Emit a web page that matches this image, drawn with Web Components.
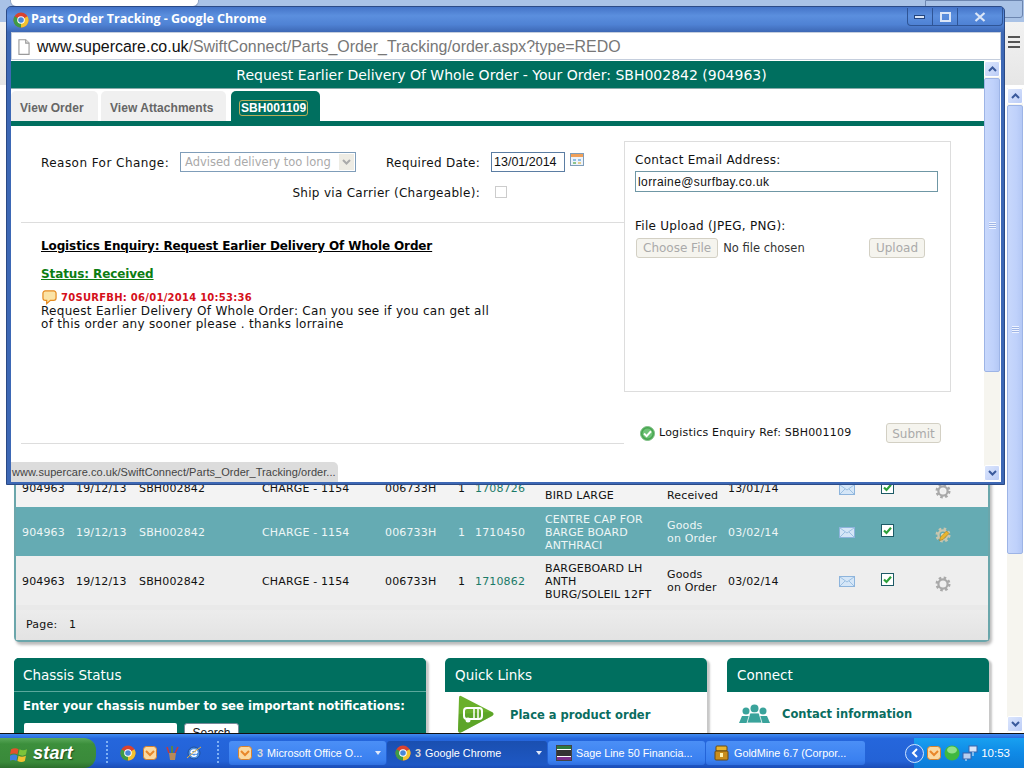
<!DOCTYPE html>
<html>
<head>
<meta charset="utf-8">
<title>Parts Order Tracking</title>
<style>
  html, body { margin: 0; padding: 0; background: #fff; }
  body { font-family: "DejaVu Sans", sans-serif; }
</style>
</head>
<body>
<desk-top>
  <back-window>
    <order-panel>
      <order-row desc="|BIRD LARGE" status="|Received" date="13/01/14" part="1708726" height="38"></order-row>
      <order-row hot desc="CENTRE CAP FOR|BARGE BOARD|ANTHRACI" status="Goods|on Order" date="03/02/14" part="1710450" height="49"></order-row>
      <order-row desc="BARGEBOARD LH|ANTH|BURG/SOLEIL 12FT" status="Goods|on Order" date="03/02/14" part="1710862" height="49"></order-row>
    </order-panel>
    <info-row></info-row>
  </back-window>
  <task-bar></task-bar>
  <popup-window>
    <enquiry-form></enquiry-form>
  </popup-window>
</desk-top>

<script>
// all the little pictures live here
const gear = (c1, c2) => `<circle cx="8" cy="8" r="6" fill="none" stroke="${c1}" stroke-width="3" stroke-dasharray="2.4 2.3"/><circle cx="8" cy="8" r="4.6" fill="none" stroke="${c1}" stroke-width="2.2"/><circle cx="8" cy="8" r="2" fill="${c2}"/>`;
const outlook = `<rect x="1.5" y="1.5" width="13" height="13" rx="3" fill="#fbd9a0" stroke="#d9822b"/><path d="M4 6l4 4 4-4" fill="none" stroke="#e8872a" stroke-width="2"/>`;
const ICONS = {
  chrome: `<circle cx="8" cy="8" r="7.5" fill="#d9432f"/><path d="M8 8L14.5 4.2A7.5 7.5 0 0 1 8 15.5z" fill="#f2c230"/><path d="M8 8L8 15.5A7.5 7.5 0 0 1 1.5 4.2z" fill="#3e9b46"/><circle cx="8" cy="8" r="3.8" fill="#fff"/><circle cx="8" cy="8" r="2.8" fill="#4a86d8"/>`,
  page: `<path d="M3.5 1.5h6l3 3v10h-9z" fill="#fff" stroke="#9a9a9a"/><path d="M9.5 1.5v3h3" fill="#e8e8e8" stroke="#9a9a9a"/>`,
  calendar: `<rect x=".5" y=".5" width="13" height="12" fill="#eef3fa" stroke="#7f9db9"/><rect x="1" y="1" width="12" height="3" fill="#f0a05a"/><path d="M3 6h3v2H3zM8 6h3v2H8z" fill="#8fbfe6"/><path d="M3 9h3v2H3z" fill="#8cc48c"/><path d="M8 9h3v2H8z" fill="#e4cd8c"/>`,
  speech: `<path d="M3.5 1h9A2.5 2.5 0 0 1 15 3.500v5a2.500 2.500 0 0 1-2.500 2.500H9L5 14.500V11H3.500A2.500 2.500 0 0 1 1 8.500v-5A2.500 2.500 0 0 1 3.500 1z" fill="#fbe3a6" stroke="#e58a1f" stroke-width="1.300"/>`,
  ok: `<circle cx="7.500" cy="7.500" r="7" fill="#46a64e" stroke="#7fbf86"/><circle cx="7.500" cy="7.500" r="5" fill="#6fc277"/><path d="M4 7.500l2.600 2.600L11 5.300" fill="none" stroke="#fff" stroke-width="2"/>`,
  mail: `<rect x=".5" y=".5" width="15" height="10" fill="#d5e6f7" stroke="#8db4dc"/><path d="M1 1l7 5 7-5M1 10l5-5M15 10l-5-5" fill="none" stroke="#9cc0e2"/>`,
  tick: `<rect x=".5" y=".5" width="12" height="12" fill="#fff" stroke="#1d5a66"/><path d="M3 6.500l2.500 2.500L10 3.800" fill="none" stroke="#2da03a" stroke-width="2.200"/>`,
  gear: gear("#a9a9a9", "#efefef"),
  geardit: gear("#c9c6ae", "#e9e4c8") + `<path d="M4.500 13.500l1-3.500 6-6 2.500 2.500-6 6z" fill="#e9b52e" stroke="#a87a1a" stroke-width=".6"/>`,
  caravan: `<path d="M4 1Q2 0 2 3L1 35Q1 39 5 37L35 21Q38 19 35 17z" fill="#6ab02c"/><path d="M2 19L1 35Q1 39 5 37L35 21Q38 19 35 17z" fill="#4f9a24" opacity=".5"/><rect x="7" y="13" width="18" height="11" rx="3" fill="none" stroke="#fff" stroke-width="2"/><path d="M17 13v11M21 13v11" stroke="#fff" stroke-width="1.500"/><circle cx="11" cy="25" r="2.500" fill="#fff"/>`,
  people: `<g fill="#3aa39b"><circle cx="7" cy="7" r="3.500"/><path d="M0 19l3-7h8l3 7z"/><circle cx="24" cy="7" r="3.500"/><path d="M17 19l3-7h8l3 7z"/><circle cx="15.500" cy="4.500" r="4"/><path d="M8 19l3-10h9l3 10z" stroke="#fff" stroke-width=".8"/></g>`,
  flag: `<path d="M1 4Q5 2 8 4L7 9Q4 7 0 9z" fill="#e2522c"/><path d="M9 4Q12 6 16 4L15 9Q12 11 8 9z" fill="#7cc43a"/><path d="M0 10Q4 8 7 10L6 15Q3 13-1 15z" fill="#3f7fe0"/><path d="M8 10Q11 12 15 10L14 15Q11 17 7 15z" fill="#f2c230"/>`,
  outlook,
  cup: `<path d="M5 8h7l-1 7H6z" fill="#b98a5a"/><path d="M5 8L3 2M8 8V1M11 8l3-6" stroke="#c93a3a" stroke-width="1.500"/><path d="M8 8V1" stroke="#3f9a46" stroke-width="1.500"/>`,
  ie: `<circle cx="8" cy="8" r="6" fill="#4d8fe0" stroke="#1f4f9c"/><path d="M5 8h6M5 8a3 3 0 0 1 6 0M5.500 10a3 3 0 0 0 5 0" fill="none" stroke="#fff" stroke-width="1.500"/><path d="M1 13Q8 6 15 2" fill="none" stroke="#e8b03a"/>`,
  sage: `<rect x=".5" y=".5" width="15" height="15" fill="#fff" stroke="#444"/><rect x="1" y="1" width="14" height="3" fill="#2f7a3c"/><rect x="1" y="5" width="14" height="6" fill="#333"/><rect x="1" y="12" width="14" height="3" fill="#7a2f8a"/>`,
  gold: `<rect x="2" y="1" width="11" height="5" rx="1" fill="#e9b52e" stroke="#6a4a10"/><rect x="1" y="6" width="13" height="9" rx="1" fill="#c98d1e" stroke="#6a4a10"/><rect x="6" y="8" width="3" height="4" fill="#fff2b0"/>`,
  ball: `<circle cx="8" cy="8" r="7.500" fill="#3fb83f"/><ellipse cx="8" cy="5" rx="5" ry="3.500" fill="#8fe08a"/>`,
  net: `<rect x="1" y="8" width="8" height="6" fill="#b8cff0" stroke="#3a62a8"/><rect x="7" y="1" width="8" height="6" fill="#d8e6fa" stroke="#3a62a8"/><path d="M4 14v2M11 7v4" stroke="#e8f0ff"/>`
};
const VIEW = { caravan: "0 0 38 39", people: "0 0 31 20", mail: "0 0 16 11", tick: "0 0 13 13", calendar: "0 0 14 13", ok: "0 0 15 15" };

class AppIcon extends HTMLElement {
  connectedCallback() {
    const name = this.getAttribute("name");
    const size = this.getAttribute("size") || 16;
    const h = this.getAttribute("h") || size;
    this.attachShadow({ mode: "open" }).innerHTML = `
      <style>:host{display:inline-block;line-height:0;flex:none}</style>
      <svg width="${size}" height="${h}" viewBox="${VIEW[name] || "0 0 16 16"}">${ICONS[name]}</svg>`;
  }
}
customElements.define("app-icon", AppIcon);

class XpScrollbar extends HTMLElement {
  connectedCallback() {
    const thumb = this.getAttribute("thumb");
    this.attachShadow({ mode: "open" }).innerHTML = `
      <style>
        :host{display:flex;flex-direction:column;width:16px;background:#f6f5ef;flex:none}
        .btn{height:16px;flex:none;border:1px solid #fff;border-radius:2px;box-sizing:border-box;
          background:linear-gradient(135deg,#dce6fd,#bccdf7);display:flex;align-items:center;justify-content:center}
        .thumb{height:${thumb}px;flex:none;margin-top:1px;box-sizing:border-box;border:1px solid #9db4e6;border-radius:2px;
          background:linear-gradient(90deg,#c8d8fc,#bfd1fb 60%,#b4c8f5);display:flex;align-items:center;justify-content:center}
        .grip{width:7px;height:7px;background:repeating-linear-gradient(#eef3ff 0 1px,#9fb5e6 1px 2px)}
        .gap{flex:1}
      </style>
      <div class="btn"><svg width="9" height="6"><path d="M1 5l3.500-3.500L8 5" fill="none" stroke="#3a5a9c" stroke-width="2"/></svg></div>
      <div class="thumb"><div class="grip"></div></div>
      <div class="gap"></div>
      <div class="btn"><svg width="9" height="6"><path d="M1 1l3.500 3.500L8 1" fill="none" stroke="#3a5a9c" stroke-width="2"/></svg></div>`;
  }
}
customElements.define("xp-scrollbar", XpScrollbar);

class DeskTop extends HTMLElement {
  constructor() {
    super();
    this.attachShadow({ mode: "open" }).innerHTML = `
      <style>
        :host{display:flex;flex-direction:column;position:relative;width:1024px;height:768px;overflow:hidden;background:#fff}
      </style>
      <slot></slot>`;
  }
}
customElements.define("desk-top", DeskTop);

class BackWindow extends HTMLElement {
  constructor() {
    super();
    this.attachShadow({ mode: "open" }).innerHTML = `
      <style>
        :host{display:flex;flex-direction:column;height:733px;overflow:hidden;flex:none}
        .strip{height:22px;flex:none;background:#a9c2e6;display:flex;justify-content:space-between}
        .tab{width:187px;margin-left:10px;background:#fff;border-radius:0 0 6px 6px;height:6px;border:1px solid #90a5c6;border-top:0}
        .ctl{width:96px;height:16px;border:1px solid #6d86b0;border-radius:0 0 3px 3px;background:#a9c2e6;margin-right:1px}
        .tools{height:63px;flex:none;background:linear-gradient(#f2f2f2,#e6e6e6);display:flex;justify-content:flex-end}
        .menu{width:12px;height:13px;margin:14px 4px 0 0;background:repeating-linear-gradient(#555 0 2px,transparent 2px 5px)}
        .view{flex:1;display:flex;min-height:0}
        .page{flex:1;padding:384px 18px 0 14px;min-width:0;background:#fff;overflow:hidden}
        xp-scrollbar{margin:3px 1px 1px 0;}
      </style>
      <div class="strip"><div class="tab"></div><div class="ctl"></div></div>
      <div class="tools"><div class="menu"></div></div>
      <div class="view">
        <div class="page"><slot></slot></div>
        <xp-scrollbar thumb="449"></xp-scrollbar>
      </div>`;
  }
}
customElements.define("back-window", BackWindow);

class OrderPanel extends HTMLElement {
  constructor() {
    super();
    this.attachShadow({ mode: "open" }).innerHTML = `
      <style>
        :host{display:block;width:972px;border:2px solid #6ba6ab;border-top:0;border-radius:0 0 5px 5px;
          box-shadow:2px 3px 3px #bbb;background:#eee}
        .pager{height:30px;box-sizing:border-box;padding:8px 0 0 10px;font-size:11px;line-height:13px;color:#111;
          background:linear-gradient(#ececec,#e3e3e3);letter-spacing:.2px;word-spacing:8px}
      </style>
      <slot></slot>
      <div class="pager">Page: 1</div>`;
  }
}
customElements.define("order-panel", OrderPanel);

class OrderRow extends HTMLElement {
  connectedCallback() {
    const a = n => this.getAttribute(n);
    const lines = s => s.split("|").map(t => t || "&nbsp;").join("<br>");
    const hot = this.hasAttribute("hot");
    const isThird = a("part") === "1710862";
    this.attachShadow({ mode: "open" }).innerHTML = `
      <style>
        :host{display:grid;box-sizing:content-box;height:${a("height") - 1}px;padding-top:1px;align-items:center;padding-left:6px;
          grid-template-columns:54px 63px 123px 123px 73px 17px 70px 122px 61px 111px 42px 54px 1fr;
          font-size:11px;line-height:13px;letter-spacing:.15px;
          color:${hot ? "#eef6f6" : "#111"};background:${hot ? "#65abb3" : isThird ? "#eeeeee" : "#f3f3f3"};
          border-bottom:${isThird ? "5px solid #e9e9e9" : "0"}}
        .part{color:${hot ? "#eef6f6" : "#1b7a68"}}
        app-icon{position:relative;top:2px}
        .cog{top:4px}
        .chk{top:0}
      </style>
      <span>904963</span><span>19/12/13</span><span>SBH002842</span><span>CHARGE - 1154</span><span>006733H</span><span>1</span>
      <span class="part">${a("part")}</span><span>${lines(a("desc"))}</span><span>${lines(a("status"))}</span><span>${a("date")}</span>
      <span><app-icon name="mail" size="16" h="11"></app-icon></span>
      <span><app-icon class="chk" name="tick" size="13"></app-icon></span>
      <span><app-icon class="cog" name="${hot ? "geardit" : "gear"}"></app-icon></span>`;
  }
}
customElements.define("order-row", OrderRow);

class InfoPanel extends HTMLElement {
  connectedCallback() {
    const w = this.getAttribute("w");
    const green = this.hasAttribute("green");
    const tmpl = this.innerHTML;
    this.innerHTML = "";
    this.attachShadow({ mode: "open" }).innerHTML = `
      <style>
        :host{display:block;width:${w}px;flex:none;height:120px;border-radius:5px 5px 0 0;
          background:${green ? "#006f5f" : "#fff"};box-shadow:3px 2px 2px #c8c8c8}
        h3{margin:0;height:34px;box-sizing:border-box;padding:0 ${green ? 9 : 10}px;background:#006f5f;color:#fff;font:normal 13.500px/34px "DejaVu Sans",sans-serif;
          border-radius:5px 5px 0 0;${green ? "border-bottom:1px solid #5aa89c;" : ""}}
        .body{padding:${green ? "6px 9px" : "3px 12px"};}
        .line{color:#fff;font-weight:bold;font-size:11.700px;line-height:16px;white-space:nowrap}
        .find{display:flex;gap:7px;margin:9px 0 0 1px}
        .inp{width:153px;height:22px;background:#fff;border-radius:2px}
        .go{width:55px;height:22px;box-sizing:border-box;background:#fff;border:1px solid #789;border-radius:3px;color:#111;
          font:12px/18px "Liberation Sans",sans-serif;text-align:center}
        .link{display:flex;align-items:center;color:#0a6d5f;font-weight:bold;font-size:11.500px}
      </style>
      <h3>${this.getAttribute("heading")}</h3>
      <div class="body">${tmpl}</div>`;
  }
}
customElements.define("info-panel", InfoPanel);

class InfoRow extends HTMLElement {
  constructor() {
    super();
    this.attachShadow({ mode: "open" }).innerHTML = `
      <style>
        :host{display:flex;margin-top:16px;gap:19px}
        .two{margin-left:1px}
      </style>
      <info-panel green w="412" heading="Chassis Status">
        <div class="line">Enter your chassis number to see important notifications:</div>
        <div class="find"><div class="inp"></div><div class="go">Search</div></div>
      </info-panel>
      <info-panel w="262" heading="Quick Links">
        <div class="link"><app-icon name="caravan" size="38" h="39"></app-icon><span style="margin-left:15px">Place a product order</span></div>
      </info-panel>
      <info-panel class="two" w="262" heading="Connect">
        <div class="link" style="padding-top:9px"><app-icon name="people" size="31" h="20"></app-icon><span style="margin-left:12px">Contact information</span></div>
      </info-panel>`;
  }
}
customElements.define("info-row", InfoRow);

class PopupWindow extends HTMLElement {
  constructor() {
    super();
    this.attachShadow({ mode: "open" }).innerHTML = `
      <style>
        :host{position:absolute;left:6px;top:6px;width:999px;height:479px;box-sizing:border-box;display:flex;flex-direction:column;
          background:#3d68b5;border:1px solid #2b4a86;border-radius:5px 5px 0 0;padding:0 3px 2px 4px}
        .title{height:25px;flex:none;margin:0 -3px 0 -4px;padding:0 1px 0 6px;display:flex;align-items:center;gap:2px;border-radius:4px 4px 0 0;
          background:linear-gradient(#4574c8,#5b8fde 35%,#4f82d4 70%,#3d68b5);
          color:#fff;font:bold 12.500px "Open Sans",sans-serif}
        .title span{flex:1;white-space:nowrap;margin-top:-2px}
        .ctl{display:flex;height:17px;margin-top:-5px;border:1px solid #2f5596;border-top:0;border-radius:0 0 4px 4px}
        .ctl b{width:24px;display:flex;align-items:center;justify-content:center;border-left:1px solid #2f5596}
        .ctl b:first-child{border-left:0}
        .ctl b:last-child{width:44px}
        .addr{height:28px;flex:none;box-sizing:border-box;background:#fff;border:1px solid #c5cedd;display:flex;align-items:center;gap:4px;padding:1px 0 0 3px;
          font:15.950px "Liberation Sans",sans-serif;color:#777;white-space:nowrap}
        .addr i{font-style:normal;color:#111}
        .main{flex:1;min-height:0;display:flex;background:#fff;position:relative}
        .content{flex:1;min-width:0;padding-top:1px}
        xp-scrollbar{margin:1px 1px 1px 0}
        .status{position:absolute;left:0;bottom:0;width:327px;height:20px;box-sizing:border-box;background:#dcdcdc;border-radius:0 5px 0 0;padding:3px 0 0 1px;
          font:11px/15px "Liberation Sans",sans-serif;letter-spacing:.05px;color:#444;white-space:nowrap}
      </style>
      <div class="title">
        <app-icon name="chrome"></app-icon><span>Parts Order Tracking - Google Chrome</span>
        <div class="ctl">
          <b><svg width="12" height="6"><rect x=".5" y="1.500" width="10" height="3" fill="#dbe6f7" stroke="#22447f"/></svg></b>
          <b><svg width="11" height="10"><rect x="1" y="1" width="9" height="8" fill="none" stroke="#dbe6f7" stroke-width="2"/></svg></b>
          <b><svg width="12" height="10"><path d="M1.500 1l9 8M10.500 1l-9 8" stroke="#dbe6f7" stroke-width="2.200"/></svg></b>
        </div>
      </div>
      <div class="addr"><app-icon name="page" size="18"></app-icon><span><i>www.supercare.co.uk</i>/SwiftConnect/Parts_Order_Tracking/order.aspx?type=REDO</span></div>
      <div class="main">
        <div class="content"><slot></slot></div>
        <xp-scrollbar thumb="294"></xp-scrollbar>
        <div class="status">www.supercare.co.uk/SwiftConnect/Parts_Order_Tracking/order...</div>
      </div>`;
  }
}
customElements.define("popup-window", PopupWindow);

class EnquiryForm extends HTMLElement {
  constructor() {
    super();
    this.attachShadow({ mode: "open" }).innerHTML = `
      <style>
        :host{display:block;font-size:12px;line-height:16px;color:#111}
        .head{height:27px;background:#006f5f;color:#fff;font-size:14px;line-height:28px;text-align:center;border-bottom:1px solid #8aa;padding-left:8px;box-sizing:content-box}
        .tabs{display:flex;gap:3px;height:30px;margin-top:2px;font:bold 12px/35px "Liberation Sans",sans-serif;color:#666;letter-spacing:.05px}
        .tabs div{padding-left:9px;background:#f0f0f0;border-radius:5px 5px 0 0;box-sizing:border-box}
        .tabs .a{width:87px}
        .tabs .b{width:125px}
        .tabs .on{margin-left:2px;width:89px;background:#006f5f;color:#fff}
        .tabs .on span{display:inline-block;line-height:14px;outline:1px solid #b9ae5a;border-radius:2px;padding:0 1px}
        .bar{height:5px;background:#006f5f}
        .body{display:flex;padding-left:10px}
        .left{width:603px;flex:none}
        .grid{display:grid;grid-template-columns:139px 176px 30px 105px 1fr;grid-auto-rows:20px;row-gap:10px;align-items:center;padding:26px 0 0 20px;letter-spacing:.3px}
        .grid > span{padding-top:2px}
        .grid > span:first-child{letter-spacing:.45px}
        .sel{box-sizing:border-box;height:20px;border:1px solid #7f9db9;color:#aaa;display:flex;justify-content:space-between;align-items:center;padding-left:4px;background:#fff;font-size:11.500px;letter-spacing:0;white-space:nowrap}
        .sel b{width:15px;height:16px;margin-right:1px;background:#eeece4;display:flex;align-items:center;justify-content:center}
        .date{display:flex;align-items:flex-start;gap:5px;letter-spacing:0}
        .date div{box-sizing:border-box;width:74px;height:20px;border:1px solid #5b7da3;font:12.500px/18px "Liberation Sans",sans-serif;padding-left:2px;background:#fff}
        .date app-icon{margin-top:1px}
        .ship{grid-column:1 / 5;text-align:right;padding-right:11px}
        .box{width:12px;height:12px;box-sizing:border-box;border:1px solid #ccc;margin-left:4px;background:#fff}
        hr{border:0;border-top:1px solid #ddd;margin:0}
        .h1{margin:15px 0 0 20px;font-weight:bold;text-decoration:underline;color:#000;letter-spacing:-.12px}
        .h2{margin:12px 0 0 20px;font-weight:bold;text-decoration:underline;color:#0c7d12;font-size:12px;letter-spacing:-.1px}
        .who{margin:8px 0 0 21px;display:flex;gap:4px;align-items:center;height:14px;color:#d5101b;font-weight:bold;font-size:10px;line-height:13px;letter-spacing:.26px}
        .msg{margin:1px 0 0 20px;width:452px;line-height:13px;height:26px;letter-spacing:.29px}
        .right{width:327px;flex:none}
        .card{box-sizing:border-box;height:251px;margin-top:15px;border:1px solid #ddd;padding:10px 10px 0;letter-spacing:.28px}
        .email{box-sizing:border-box;width:303px;height:21px;margin-top:3px;border:1px solid #6f97a5;font:12px/20px "Liberation Sans",sans-serif;letter-spacing:.4px;padding-left:2px}
        .lab2{margin-top:26px}
        .file{display:flex;align-items:center;margin-top:4px;padding-left:1px;letter-spacing:0}
        .btn{box-sizing:border-box;height:20px;border:1px solid #d3d0c4;border-radius:3px;background:#f5f4ee;color:#aaa;padding:0 6px;line-height:19px;font-size:12px}
        .none{margin-left:5px;color:#333;flex:1;font-size:11.500px}
        .up{margin-right:15px}
        .foot{display:flex;align-items:center;margin-top:31px;padding-left:16px;font-size:11px;letter-spacing:.2px;height:20px}
        .foot span{margin-left:4px;flex:1}
        .foot .btn{margin-right:10px;letter-spacing:0;width:55px;text-align:center;padding:0;line-height:20px}
        .hr2{margin-top:112px}
      </style>
      <div class="head">Request Earlier Delivery Of Whole Order - Your Order: SBH002842 (904963)</div>
      <div class="tabs"><div class="a">View Order</div><div class="b">View Attachments</div><div class="on"><span>SBH001109</span></div></div>
      <div class="bar"></div>
      <div class="body">
        <div class="left">
          <div class="grid">
            <span>Reason For Change:</span>
            <div class="sel">Advised delivery too long<b><svg width="9" height="6"><path d="M1 1l3.500 3.500L8 1" fill="none" stroke="#aaa" stroke-width="2"/></svg></b></div>
            <span></span>
            <span>Required Date:</span>
            <div class="date"><div>13/01/2014</div><app-icon name="calendar" size="14" h="13"></app-icon></div>
            <span class="ship">Ship via Carrier (Chargeable):</span>
            <div class="box"></div>
          </div>
          <hr style="margin-top:20px">
          <div class="h1">Logistics Enquiry: Request Earlier Delivery Of Whole Order</div>
          <div class="h2">Status: Received</div>
          <div class="who"><app-icon name="speech" size="15"></app-icon><span>70SURFBH: 06/01/2014 10:53:36</span></div>
          <div class="msg">Request Earlier Delivery Of Whole Order: Can you see if you can get all of this order any sooner please . thanks lorraine</div>
          <hr class="hr2">
        </div>
        <div class="right">
          <div class="card">
            <div>Contact Email Address:</div>
            <div class="email">lorraine@surfbay.co.uk</div>
            <div class="lab2">File Upload (JPEG, PNG):</div>
            <div class="file"><div class="btn">Choose File</div><div class="none">No file chosen</div><div class="btn up">Upload</div></div>
          </div>
          <div class="foot"><app-icon name="ok" size="15"></app-icon><span>Logistics Enquiry Ref: SBH001109</span><div class="btn">Submit</div></div>
        </div>
      </div>`;
  }
}
customElements.define("enquiry-form", EnquiryForm);

class TaskButton extends HTMLElement {
  connectedCallback() {
    const on = this.hasAttribute("on");
    const n = this.getAttribute("count");
    const caret = this.hasAttribute("caret");
    this.attachShadow({ mode: "open" }).innerHTML = `
      <style>
        :host{display:flex;align-items:center;box-sizing:border-box;width:${this.getAttribute("w")}px;height:24px;flex:none;border-radius:3px;padding-left:8px;
          background:${on ? "linear-gradient(#1a4fb0,#1e58c4)" : "linear-gradient(#4b8ff6,#3a80f0 80%,#3070e0)"};
          color:#fff;font:10.800px "Liberation Sans",sans-serif;white-space:nowrap}
        b{color:#d8d8d8;margin:0 4px 0 4px}
        span{flex:1}
        i{font-size:0;width:0;height:0;border:3px solid transparent;border-top:4px solid #dfe8fa;margin:3px 5px 0 0}
      </style>
      <app-icon name="${this.getAttribute("icon")}"></app-icon>${n ? `<b>${n}</b>` : `<b style="margin:0 2px"></b>`}<span>${this.getAttribute("label")}</span>${caret ? "<i></i>" : ""}`;
  }
}
customElements.define("task-button", TaskButton);

class TaskBar extends HTMLElement {
  constructor() {
    super();
    this.attachShadow({ mode: "open" }).innerHTML = `
      <style>
        :host{display:flex;height:35px;flex:none;box-sizing:border-box;border-top:1px solid #111;align-items:flex-end;
          background:linear-gradient(#3f8af0,#2566dc 14%,#2362d6 80%,#1a4cb6)}
        .start{width:96px;height:30px;box-sizing:border-box;flex:none;display:flex;align-items:center;gap:6px;padding-left:10px;border-radius:0 12px 12px 0;
          background:linear-gradient(#5aa85a,#3c8f3c 20%,#3a8a3a 80%,#2c6f2c);color:#fff;
          font:italic bold 18px "Liberation Sans",sans-serif;letter-spacing:.2px;text-shadow:1px 1px 1px #1d4d1d}
        .grip{width:2px;height:24px;margin:0 12px 3px 10px;flex:none;background:repeating-linear-gradient(#7fb0f5 0 2px,transparent 2px 4px)}
        .quick{display:flex;gap:6px;flex:none;width:97px;margin-bottom:7px}
        .btns{display:flex;gap:1px;flex:1;margin-bottom:3px}
        .tray{width:110px;height:30px;flex:none;box-sizing:border-box;background:linear-gradient(#18a0f0,#0f8ae6 50%,#0d7cd8);display:flex;align-items:center;gap:2px;color:#fff;font:11.500px "Liberation Sans",sans-serif}
        .arrow{width:17px;height:17px;margin-left:-9px;border-radius:50%;background:#2b6fe0;border:1px solid #cfe4ff;display:flex;align-items:center;justify-content:center;flex:none}
        .clock{margin-left:auto;margin-right:14px}
      </style>
      <div class="start"><app-icon name="flag" size="17"></app-icon>start</div>
      <div class="grip"></div>
      <div class="quick"><app-icon name="chrome"></app-icon><app-icon name="outlook"></app-icon><app-icon name="cup"></app-icon><app-icon name="ie"></app-icon></div>
      <div class="grip" style="margin:0 10px 3px 0"></div>
      <div class="btns">
        <task-button w="157" icon="outlook" count="3" label="Microsoft Office O..." caret></task-button>
        <task-button on w="160" icon="chrome" count="3" label="Google Chrome" caret></task-button>
        <task-button w="157" icon="sage" label="Sage Line 50 Financia..."></task-button>
        <task-button w="159" icon="gold" label="GoldMine 6.7 (Corpor..."></task-button>
      </div>
      <div class="tray">
        <div class="arrow"><svg width="8" height="10"><path d="M6 1L2 5l4 4" fill="none" stroke="#fff" stroke-width="2"/></svg></div>
        <app-icon name="outlook"></app-icon><app-icon name="ball"></app-icon><app-icon name="net"></app-icon>
        <span class="clock">10:53</span>
      </div>`;
  }
}
customElements.define("task-bar", TaskBar);
</script>
</body>
</html>
